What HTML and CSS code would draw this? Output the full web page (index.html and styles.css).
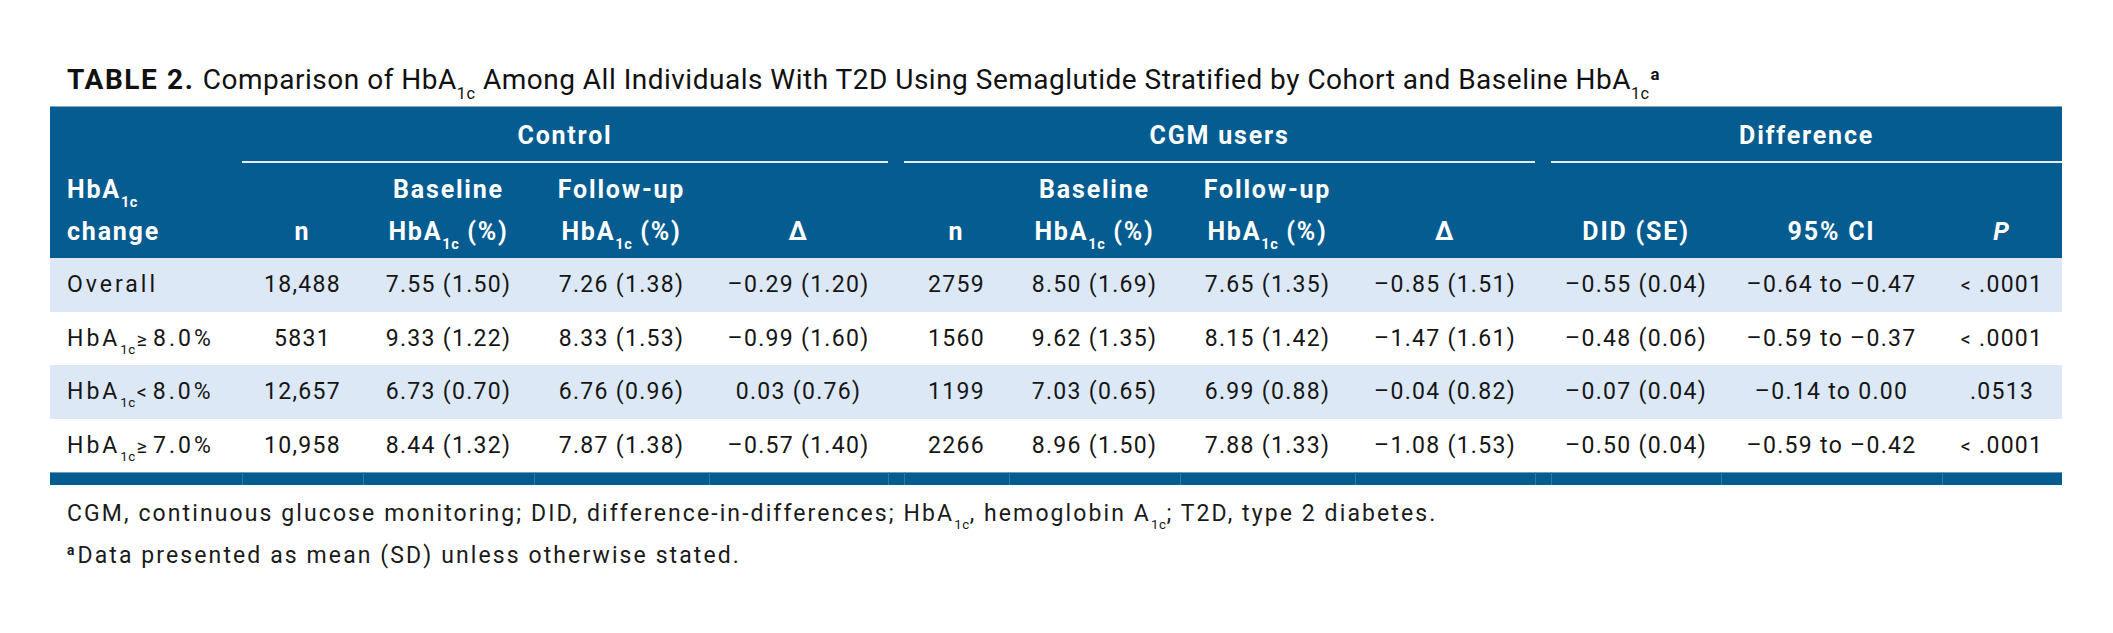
FILE: index.html
```html
<!DOCTYPE html>
<html lang="en">
<head>
<meta charset="utf-8">
<title>Table 2</title>
<link rel="stylesheet" href="styles.css">
</head>
<body>
<div class="page">
  <div class="caption"><span class="caption-label">TABLE 2.</span> Comparison of HbA<span class="sub">1c</span> Among All Individuals With T2D Using Semaglutide Stratified by Cohort and Baseline HbA<span class="sub">1c</span><span class="sup">a</span></div>
  <table class="data">
    <colgroup>
      <col class="c-label"><col class="c-n1"><col class="c-base"><col class="c-follow"><col class="c-delta">
      <col class="c-gap">
      <col class="c-n2"><col class="c-base"><col class="c-follow"><col class="c-delta2">
      <col class="c-gap">
      <col class="c-did"><col class="c-ci"><col class="c-p">
    </colgroup>
    <thead>
      <tr class="group-row">
        <th></th>
        <th colspan="4" class="group">Control</th>
        <th></th>
        <th colspan="4" class="group">CGM users</th>
        <th></th>
        <th colspan="3" class="group">Difference</th>
      </tr>
      <tr class="col-row">
        <th class="first">HbA<span class="sub">1c</span><br>change</th>
        <th>n</th>
        <th>Baseline<br>HbA<span class="sub">1c</span> (%)</th>
        <th>Follow-up<br>HbA<span class="sub">1c</span> (%)</th>
        <th>Δ</th>
        <th></th>
        <th>n</th>
        <th>Baseline<br>HbA<span class="sub">1c</span> (%)</th>
        <th>Follow-up<br>HbA<span class="sub">1c</span> (%)</th>
        <th>Δ</th>
        <th></th>
        <th>DID (SE)</th>
        <th>95% CI</th>
        <th><i>P</i></th>
      </tr>
    </thead>
    <tbody>
      <tr class="shade">
        <td class="first">Overall</td>
        <td>18,488</td><td>7.55 (1.50)</td><td>7.26 (1.38)</td><td>–0.29 (1.20)</td>
        <td></td>
        <td>2759</td><td>8.50 (1.69)</td><td>7.65 (1.35)</td><td>–0.85 (1.51)</td>
        <td></td>
        <td>–0.55 (0.04)</td><td>–0.64 to –0.47</td><td><span class="lt">&lt;</span> .0001</td>
      </tr>
      <tr>
        <td class="first">HbA<span class="sub">1c</span><span class="rel">≥</span>8.0%</td>
        <td>5831</td><td>9.33 (1.22)</td><td>8.33 (1.53)</td><td>–0.99 (1.60)</td>
        <td></td>
        <td>1560</td><td>9.62 (1.35)</td><td>8.15 (1.42)</td><td>–1.47 (1.61)</td>
        <td></td>
        <td>–0.48 (0.06)</td><td>–0.59 to –0.37</td><td><span class="lt">&lt;</span> .0001</td>
      </tr>
      <tr class="shade">
        <td class="first">HbA<span class="sub">1c</span><span class="rel">&lt;</span>8.0%</td>
        <td>12,657</td><td>6.73 (0.70)</td><td>6.76 (0.96)</td><td>0.03 (0.76)</td>
        <td></td>
        <td>1199</td><td>7.03 (0.65)</td><td>6.99 (0.88)</td><td>–0.04 (0.82)</td>
        <td></td>
        <td>–0.07 (0.04)</td><td>–0.14 to 0.00</td><td>.0513</td>
      </tr>
      <tr>
        <td class="first">HbA<span class="sub">1c</span><span class="rel">≥</span>7.0%</td>
        <td>10,958</td><td>8.44 (1.32)</td><td>7.87 (1.38)</td><td>–0.57 (1.40)</td>
        <td></td>
        <td>2266</td><td>8.96 (1.50)</td><td>7.88 (1.33)</td><td>–1.08 (1.53)</td>
        <td></td>
        <td>–0.50 (0.04)</td><td>–0.59 to –0.42</td><td><span class="lt">&lt;</span> .0001</td>
      </tr>
    </tbody>
    <tfoot>
      <tr class="bar">
        <td></td><td></td><td></td><td></td><td></td><td></td><td></td><td></td><td></td><td></td><td></td><td></td><td></td><td></td>
      </tr>
    </tfoot>
  </table>
  <div class="notes">
    <p>CGM, continuous glucose monitoring; DID, difference-in-differences; HbA<span class="sub">1c</span>, hemoglobin A<span class="sub">1c</span>; T2D, type 2 diabetes.</p>
    <p><span class="sup">a</span>Data presented as mean (SD) unless otherwise stated.</p>
  </div>
</div>
</body>
</html>
```

FILE: styles.css
```css
* {
  box-sizing: border-box;
}

body {
  margin: 0;
  background: #ffffff;
  font-family: Roboto, "Liberation Sans", sans-serif;
  color: #151515;
}

.page {
  width: 2113px;
  padding: 65px 0 0 50px;
}

.caption {
  margin: 0 0 11px 17px;
  font-size: 28px;
  line-height: 30px;
  letter-spacing: 0.5px;
  white-space: nowrap;
  color: #111;
}

.caption-label {
  font-weight: 700;
  letter-spacing: 1.6px;
  margin-right: 1px;
}

.sub {
  font-size: 0.58em;
  vertical-align: -0.6em;
  line-height: 0;
  letter-spacing: 0.5px;
}

.sup {
  font-size: 0.6em;
  font-weight: 700;
  vertical-align: 0.55em;
  line-height: 0;
  margin-left: 1px;
}

.data {
  width: 2012px;
  table-layout: fixed;
  border-collapse: separate;
  border-spacing: 0;
}

.c-label { width: 192px; }
.c-n1 { width: 121px; }
.c-base { width: 171px; }
.c-follow { width: 175px; }
.c-delta { width: 179px; }
.c-gap { width: 16px; }
.c-n2 { width: 105px; }
.c-delta2 { width: 180px; }
.c-did { width: 170px; }
.c-ci { width: 221px; }
.c-p { width: 120px; }

.data th {
  background: #055c90;
  color: #ffffff;
  font-weight: 700;
  font-size: 25px;
  letter-spacing: 1.8px;
  padding: 0;
  text-align: center;
  white-space: nowrap;
}

.group-row th {
  height: 57px;
  padding-top: 3px;
  vertical-align: middle;
  line-height: 30px;
  border-top: 1px solid #7fa7c7;
}

.group-row th.group {
  border-bottom: 2px solid #e3ecf4;
}

.col-row th {
  height: 95px;
  line-height: 42px;
  padding-bottom: 5px;
  vertical-align: bottom;
}

.data th.first,
.data td.first {
  text-align: left;
  padding-left: 17px;
}

.data td {
  height: 53.5px;
  padding: 0;
  font-size: 23px;
  letter-spacing: 1.3px;
  text-align: center;
  vertical-align: middle;
  white-space: nowrap;
  color: #151515;
}

.data td.first {
  letter-spacing: 3px;
}

.shade td {
  background: #dce8f5;
}

.rel {
  font-size: 0.85em;
  margin: 0 3px 0 1px;
}

.lt {
  font-size: 0.85em;
}

.bar td {
  height: 13px;
  background: #055c90;
  border-top: 1px solid #6f9cc2;
  border-left: 1px solid #2a7aa8;
}

.bar td:first-child {
  border-left: none;
}

.notes {
  margin: 8px 0 0 17px;
  font-size: 23px;
  line-height: 42px;
  letter-spacing: 2.1px;
  color: #1a1a1a;
}

.notes p {
  margin: 0;
  white-space: nowrap;
}

.notes .sup {
  margin-left: 0;
  margin-right: 1px;
  vertical-align: 0.6em;
}
```
